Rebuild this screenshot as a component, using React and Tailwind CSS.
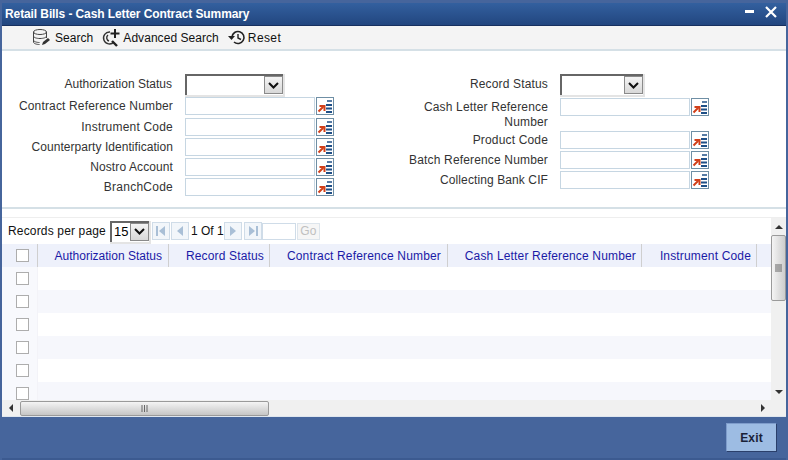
const leftFields = [
    { label: 'Contract Reference Number', rowClass: 'h-[20px] mt-[1px]', track: 'tracking-[0.16px]' },
    { label: 'Instrument Code', rowClass: 'h-[20px] mt-[1px]', track: 'tracking-[0.2px]' },
    { label: 'Counterparty Identification', rowClass: 'h-[20px]', track: 'tracking-[0.05px]' },
    { label: 'Nostro Account', rowClass: 'h-[20px]', track: 'tracking-[0.1px]' },
    { label: 'BranchCode', rowClass: 'h-[20px]', track: 'tracking-[0.25px]' },
];

const rightFields = [
    { label: 'Product Code', rowClass: 'h-[20px]', track: 'tracking-[0.16px]' },
    { label: 'Batch Reference Number', rowClass: 'h-[20px]', track: 'tracking-[0.16px]' },
    { label: 'Collecting Bank CIF', rowClass: 'h-[20px]', track: 'tracking-[0.1px]' },
];

const columns = [
    { title: 'Authorization Status', width: 'w-[131px]', track: 'tracking-[0px] pr-[6px]' },
    { title: 'Record Status', width: 'w-[101px]', track: 'tracking-[0.16px] pr-[5px]' },
    { title: 'Contract Reference Number', width: 'w-[178px]', track: 'tracking-[0.16px] pr-[6px]' },
    { title: 'Cash Letter Reference Number', width: 'w-[194px]', track: 'tracking-[0.16px] pr-[5px]' },
    { title: 'Instrument Code', width: 'w-[115px]', track: 'tracking-[0.16px] pr-[5px]' },
];

const rows = [0, 1, 2, 3, 4, 5];

const ChevronBox = () => (
    <span className="flex h-[18px] w-[19px] items-center justify-center border border-[#8a8a8a] bg-gradient-to-b from-[#f4f4f4] to-[#d8d8d8]">
        <svg width="11" height="7" viewBox="0 0 11 7">
            <path d="M1 1l4.500 4.500L10 1" fill="none" stroke="#111" strokeWidth="2" />
        </svg>
    </span>
);

const SelectBox = ({ width, value }) => (
    <div className={`flex h-[21px] ${width} items-start justify-between border-t-2 border-l-2 border-t-[#666] border-l-[#666] bg-white shadow-[1px_1px_0_1px_#e4e4e4]`}>
        <span className="pl-[2px] text-[13px] leading-[18px] text-black">{value}</span>
        <ChevronBox />
    </div>
);

const ListButton = () => (
    <span className="flex h-[18px] w-[18px] shrink-0 items-center justify-center border border-[#6f8fa5] bg-white">
        <svg width="16" height="14" viewBox="0 0 16 14">
            <path d="M1.500 12.500L6 8M2.500 7H7.500V12" fill="none" stroke="#d2401a" strokeWidth="2" />
            <path d="M10 2h5" stroke="#1f4f86" strokeWidth="1.500" />
            <path d="M9 6h6M9 9.500h6M9 13h6" stroke="#1f4f86" strokeWidth="1.800" />
        </svg>
    </span>
);

const TextField = () => (
    <span className="h-[18px] w-[130px] shrink-0 border border-[#c6d6e2] bg-white" />
);

const FieldRow = ({ label, track, rowClass }) => (
    <div className={`flex items-center ${rowClass}`}>
        <span className={`w-[171px] ${track} shrink-0 text-right leading-[14px]`}>{label}</span>
        <span className="ml-[12px] flex items-center gap-[1px]">
            <TextField />
            <ListButton />
        </span>
    </div>
);

const PageButton = ({ d, wide }) => (
    <span className="flex h-[18px] w-[18px] items-center justify-center border border-[#cfdce8] bg-[#f2f6fa]">
        <svg width="12" height="12" viewBox="0 0 12 12">
            {wide && <path d={wide} fill="#a9bfd6" />}
            <path d={d} fill="#a9bfd6" />
        </svg>
    </span>
);

const Checkbox = () => <span className="block h-[13px] w-[13px] border border-[#adadad] bg-white" />;

const ScrollArrow = ({ d }) => (
    <svg width="8" height="8" viewBox="0 0 8 8">
        <path d={d} fill="#333" />
    </svg>
);

const App = () => {
    return (
        <div className="flex h-[460px] w-[788px] flex-col overflow-hidden bg-[#46659c] px-[2px] pt-[3px] font-['Liberation_Sans',Arial,sans-serif] text-[12px] tracking-[0.16px] text-[#222]">
            {/* title bar */}
            <div className="flex h-[23px] shrink-0 items-center justify-between border-b border-[#17305f] bg-gradient-to-b from-[#33609f] to-[#22467f] pl-[3px] pr-[9px]">
                <span className="font-bold leading-[22px] tracking-[-0.1px] text-white">Retail Bills - Cash Letter Contract Summary</span>
                <span className="flex items-start gap-[11px] text-white">
                    <svg width="9" height="4" viewBox="0 0 9 4" className="mt-[4px]">
                        <path d="M0 0h9v3H0z" fill="#fff" />
                    </svg>
                    <svg width="12" height="12" viewBox="0 0 12 12" className="mb-[5px]">
                        <path d="M1 1l10 10M11 1L1 11" stroke="#fff" strokeWidth="2.200" />
                    </svg>
                </span>
            </div>

            {/* toolbar */}
            <div className="flex h-[25px] shrink-0 items-center border-b-2 border-[#d5e0e6] bg-[#f4f4f4] pl-[29px] tracking-[0.05px] text-[#111]">
                <svg width="20" height="20" viewBox="0 0 20 20">
                    <ellipse cx="9" cy="4" rx="6.500" ry="2.500" fill="none" stroke="#444" />
                    <path d="M2.500 4v10c0 1.500 3 2.500 6 2.500M15.500 4v6M2.500 8c0 1.500 3 2.500 6.500 2.500s6.500-1 6.500-2.500M2.500 12c0 1.500 3 2.500 6 2.500" fill="none" stroke="#444" />
                    <path d="M11 17l1-3 5-4 2 2-5 4z" fill="#333" />
                </svg>
                <span className="ml-[4px]">Search</span>
                <svg width="20" height="20" viewBox="0 0 20 20" className="ml-[8px]">
                    <path d="M9 4a6 6 0 1 0 4 10M7 7a3.500 3.500 0 0 0 1 6" fill="none" stroke="#333" strokeWidth="1.400" />
                    <path d="M11 13l5 5" stroke="#222" strokeWidth="2.400" />
                    <path d="M14 1v9M9.500 5.500h9" stroke="#222" strokeWidth="2" />
                </svg>
                <span className="ml-[2px]">Advanced Search</span>
                <svg width="20" height="18" viewBox="0 0 20 18" className="ml-[8px]">
                    <path d="M5 8a6 6 0 1 1 2 5" fill="none" stroke="#222" strokeWidth="1.600" />
                    <path d="M1 7h7l-3.500 4z" fill="#222" />
                    <path d="M11 5v4l3 1.500" fill="none" stroke="#222" strokeWidth="1.400" />
                </svg>
                <span className="ml-[1px] tracking-[0.4px]">Reset</span>
            </div>

            {/* search form */}
            <div className="flex h-[158px] shrink-0 items-start border-b-2 border-[#d5e0e6] bg-white pt-[23px] text-[#333]">
                <div className="w-[375px]">
                    <div className="flex h-[21px] items-start">
                        <span className="w-[170px] shrink-0 text-right leading-[20px] tracking-[0px]">Authorization Status</span>
                        <span className="ml-[13px]">
                            <SelectBox width="w-[98px]" />
                        </span>
                    </div>
                    {leftFields.map((field) => (
                        <FieldRow key={field.label} label={field.label} track={field.track} rowClass={field.rowClass} />
                    ))}
                </div>
                <div className="w-[400px]">
                    <div className="flex h-[21px] items-start">
                        <span className="w-[171px] shrink-0 text-right leading-[20px]">Record Status</span>
                        <span className="ml-[12px]">
                            <SelectBox width="w-[83px]" />
                        </span>
                    </div>
                    <div className="mt-[3px] flex h-[32px] items-start">
                        <span className="mt-[2px] w-[171px] shrink-0 text-right leading-[15px]">
                            Cash Letter Reference
                            <br />
                            Number
                        </span>
                        <span className="ml-[12px] flex items-center gap-[1px]">
                            <TextField />
                            <ListButton />
                        </span>
                    </div>
                    {rightFields.map((field) => (
                        <FieldRow key={field.label} label={field.label} track={field.track} rowClass={field.rowClass} />
                    ))}
                </div>
            </div>

            <div className="h-[8px] shrink-0 bg-white" />

            {/* results */}
            <div className="flex min-h-0 flex-1 flex-col border-t border-[#eeeeee] bg-white">
                <div className="flex min-h-0 flex-1">
                    <div className="min-w-0 flex-1 overflow-hidden">
                        <div className="flex h-[26px] items-center pl-[6px] text-[#111]">
                            <span>Records per page</span>
                            <span className="ml-[4px]">
                                <SelectBox width="w-[39px]" value="15" />
                            </span>
                            <span className="ml-[3px] flex items-center gap-[1px]">
                                <PageButton wide="M1 1h2v10H1z" d="M10 1v10L4 6z" />
                                <PageButton d="M9 1v10L3 6z" />
                            </span>
                            <span className="ml-[2px] w-[32px] whitespace-nowrap tracking-[0px] text-[#111]">1 Of 1</span>
                            <span className="ml-[1px] flex items-center gap-[2px]">
                                <PageButton d="M3 1v10l6-5z" />
                                <PageButton wide="M9 1h2v10H9z" d="M2 1v10l6-5z" />
                            </span>
                            <span className="h-[17px] w-[34px] border border-[#cfdce8] bg-white" />
                            <span className="ml-[1px] flex h-[17px] w-[23px] items-center justify-center border border-[#dde5ec] bg-[#f6f6f6] text-[#c0c0c0]">Go</span>
                        </div>
                        <div className="flex h-[23px] w-[770px] items-stretch bg-[#eef1fb] text-[#1a1aa6]">
                            <div className="flex w-[36px] shrink-0 items-center justify-center border-r border-[#cfcfcf] pl-[6px]">
                                <Checkbox />
                            </div>
                            {columns.map((column) => (
                                <div key={column.title} className={`${column.width} ${column.track} flex shrink-0 items-center justify-end whitespace-nowrap border-r border-[#cfcfcf]`}>
                                    {column.title}
                                </div>
                            ))}
                        </div>
                        {rows.map((row) => (
                            <div key={row} className={`flex h-[23px] ${row % 2 === 1 ? 'bg-[#f6f7fc]' : 'bg-white'}`}>
                                <div className="flex w-[36px] shrink-0 items-center justify-center border-r border-[#f3f3f8] bg-[#f8f9fd] pl-[6px]">
                                    <Checkbox />
                                </div>
                            </div>
                        ))}
                    </div>
                    {/* vertical scrollbar */}
                    <div className="flex w-[15px] shrink-0 flex-col items-center bg-[#f0f0f0]">
                        <span className="flex h-[17px] items-center justify-center">
                            <ScrollArrow d="M0 6l4-4 4 4z" />
                        </span>
                        <span className="flex h-[66px] w-[15px] items-center justify-center rounded-[2px] border border-[#9a9a9a] bg-gradient-to-r from-[#f4f4f4] to-[#cdcdcd]">
                            <svg width="7" height="8" viewBox="0 0 7 8">
                                <path d="M0 1h7M0 3h7M0 5h7M0 7h7" stroke="#666" />
                            </svg>
                        </span>
                        <span className="mt-auto flex h-[17px] items-center justify-center">
                            <ScrollArrow d="M0 2l4 4 4-4z" />
                        </span>
                    </div>
                </div>
                {/* horizontal scrollbar */}
                <div className="flex h-[17px] shrink-0 items-center border-b border-[#dfe6ee] bg-[#f0f0f0]">
                    <span className="flex w-[18px] shrink-0 items-center justify-center">
                        <ScrollArrow d="M6 0L2 4l4 4z" />
                    </span>
                    <span className="flex h-[15px] w-[249px] items-center justify-center rounded-[2px] border border-[#9a9a9a] bg-gradient-to-b from-[#f4f4f4] to-[#c6c6c6]">
                        <svg width="8" height="7" viewBox="0 0 8 7">
                            <path d="M1 0v7M3.500 0v7M6 0v7" stroke="#666" />
                        </svg>
                    </span>
                    <span className="ml-auto mr-[19px] flex items-center">
                        <ScrollArrow d="M2 0l4 4-4 4z" />
                    </span>
                </div>
            </div>

            {/* footer */}
            <div className="flex h-[43px] shrink-0 items-center justify-end border-b-2 border-[#3c5a90] pr-[10px] pb-[1px]">
                <button className="h-[28px] w-[50px] border-t border-l border-[#7e9ccb] bg-[#9dbce3] font-bold text-[#1a2238] shadow-[1px_1px_0_#2a3f6b]">
                    Exit
                </button>
            </div>
        </div>
    );
};

export default App;
